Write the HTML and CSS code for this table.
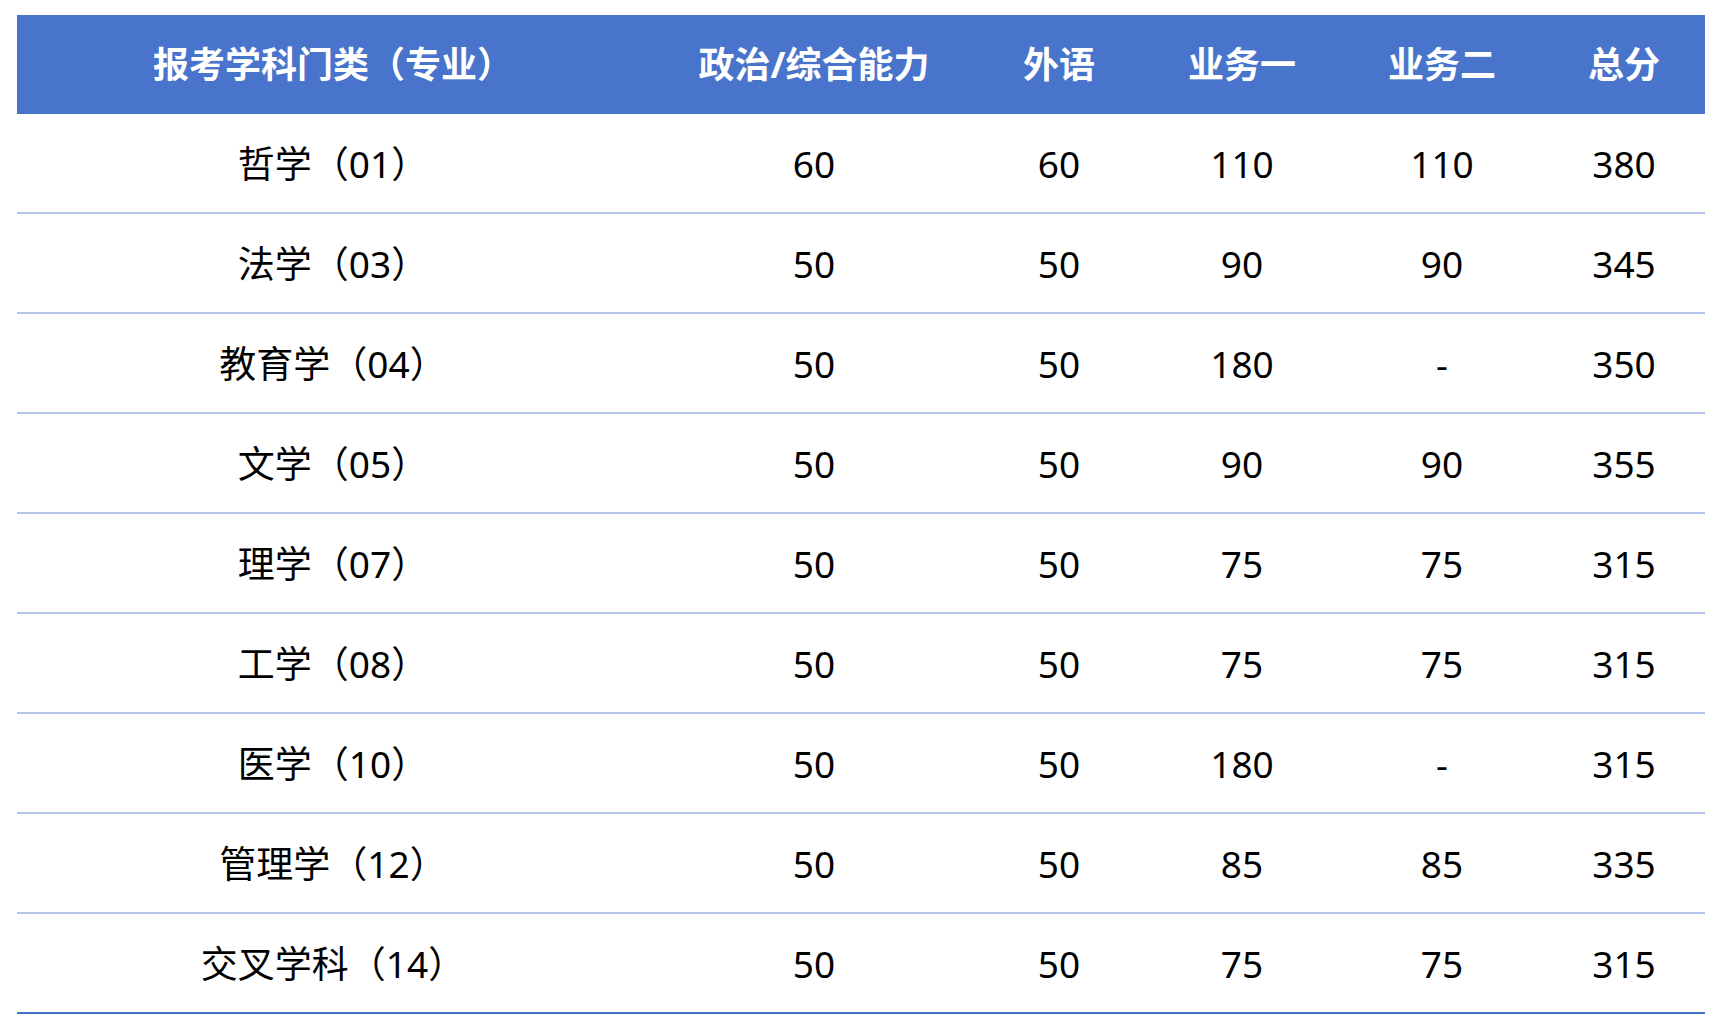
FILE: index.html
```html
<!DOCTYPE html>
<html lang="zh-CN">
<head>
<meta charset="utf-8">
<title>分数线</title>
<link rel="stylesheet" href="styles.css">
</head>
<body>
<table class="score-table">
  <colgroup>
    <col class="c1"><col class="c2"><col class="c3"><col class="c4"><col class="c5"><col class="c6">
  </colgroup>
  <thead>
    <tr>
      <th class="first">报考学科门类（专业）</th>
      <th>政治/综合能力</th>
      <th>外语</th>
      <th>业务一</th>
      <th>业务二</th>
      <th class="last">总分</th>
    </tr>
  </thead>
  <tbody>
    <tr><td class="first">哲学（01）</td><td>60</td><td>60</td><td>110</td><td>110</td><td class="last">380</td></tr>
    <tr><td class="first">法学（03）</td><td>50</td><td>50</td><td>90</td><td>90</td><td class="last">345</td></tr>
    <tr><td class="first">教育学（04）</td><td>50</td><td>50</td><td>180</td><td>-</td><td class="last">350</td></tr>
    <tr><td class="first">文学（05）</td><td>50</td><td>50</td><td>90</td><td>90</td><td class="last">355</td></tr>
    <tr><td class="first">理学（07）</td><td>50</td><td>50</td><td>75</td><td>75</td><td class="last">315</td></tr>
    <tr><td class="first">工学（08）</td><td>50</td><td>50</td><td>75</td><td>75</td><td class="last">315</td></tr>
    <tr><td class="first">医学（10）</td><td>50</td><td>50</td><td>180</td><td>-</td><td class="last">315</td></tr>
    <tr><td class="first">管理学（12）</td><td>50</td><td>50</td><td>85</td><td>85</td><td class="last">335</td></tr>
    <tr><td class="first">交叉学科（14）</td><td>50</td><td>50</td><td>75</td><td>75</td><td class="last">315</td></tr>
  </tbody>
</table>
</body>
</html>
```

FILE: styles.css
```css
html, body {
  margin: 0;
  padding: 0;
  background: #ffffff;
}

body {
  padding: 15px 15px 0 17px;
  font-family: "Noto Sans", "Noto Sans CJK SC", sans-serif;
}

.score-table {
  width: 1688px;
  table-layout: fixed;
  border-collapse: separate;
  border-spacing: 0;
}

.c1 { width: 608px; }
.c2 { width: 378px; }
.c3 { width: 112px; }
.c4 { width: 254px; }
.c5 { width: 146px; }
.c6 { width: 190px; }

.score-table th {
  box-sizing: border-box;
  height: 99px;
  padding: 0;
  background: #4874cb;
  color: #ffffff;
  font-size: 36px;
  font-weight: 700;
  text-align: center;
  vertical-align: middle;
  white-space: nowrap;
  line-height: 1;
}

.score-table td {
  box-sizing: border-box;
  height: 100px;
  padding: 0;
  color: #000000;
  font-size: 37px;
  font-weight: 400;
  text-align: center;
  vertical-align: middle;
  white-space: nowrap;
  line-height: 1;
  border-bottom: 2px solid #b4c6e9;
}

.score-table tbody tr:last-child td {
  border-bottom-color: #4472c4;
}

.score-table .first {
  padding-left: 24px;
}

.score-table .last {
  padding-left: 28px;
}
```
